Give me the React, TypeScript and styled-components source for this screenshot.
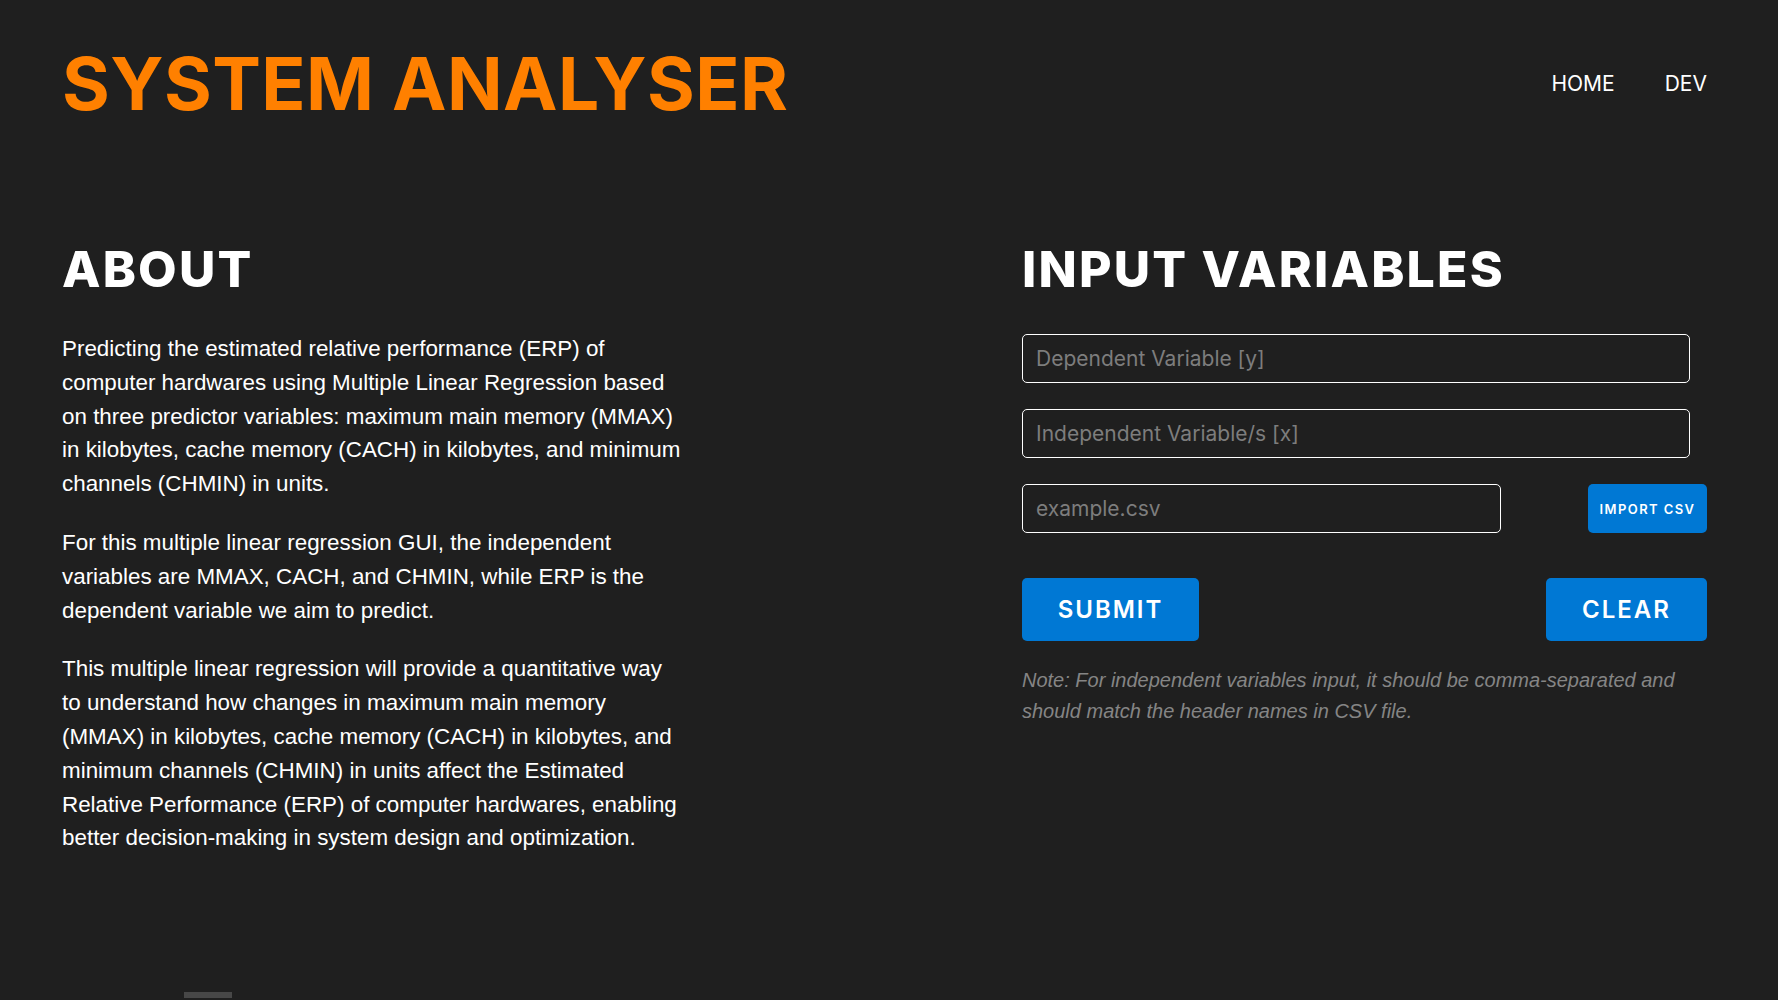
import React from "react";
import styled, { createGlobalStyle } from "styled-components";

const GlobalStyle = createGlobalStyle`
  html, body {
    margin: 0;
    padding: 0;
    background: #1f1f1f;
  }
  * { box-sizing: border-box; }
`;

const Page = styled.div`
  min-height: 100vh;
  background: #1f1f1f;
  padding: 0 71px 0 62px;
  overflow: hidden;
`;

const Header = styled.header`
  display: flex;
  justify-content: space-between;
  align-items: center;
  padding-top: 47px;
`;

const Logo = styled.h1`
  margin: 0;
  font-family: Inter, "Noto Sans", sans-serif;
  font-weight: 700;
  font-size: 73px;
  line-height: 1;
  color: #ff8000;
  letter-spacing: 0.4px;
`;

const Nav = styled.nav`
  display: flex;
  gap: 50px;
`;

const NavLink = styled.a`
  font-family: Inter, "Noto Sans", sans-serif;
  font-weight: 400;
  font-size: 21px;
  color: #ffffff;
  text-decoration: none;
`;

const Main = styled.main`
  display: grid;
  grid-template-columns: 685px 685px;
  justify-content: space-between;
  padding-top: 124px;
`;

const Column = styled.section`
  display: flex;
  flex-direction: column;
`;

const Heading = styled.h2`
  margin: 0 0 38px;
  font-family: Inter, "Noto Sans", sans-serif;
  font-weight: 800;
  font-size: 50px;
  line-height: 1;
  color: #ffffff;
  letter-spacing: 2.2px;
`;

const Paragraph = styled.p`
  margin: 0 0 25px;
  max-width: 620px;
  font-family: "Liberation Sans", Arial, sans-serif;
  font-size: 22.4px;
  line-height: 33.8px;
  color: #ffffff;
`;

const Form = styled.form`
  display: flex;
  flex-direction: column;
  gap: 26px;
  margin-top: 2px;
`;

const TextInput = styled.input<{ $width?: number }>`
  width: ${(p) => (p.$width ? `${p.$width}px` : "668px")};
  height: 49px;
  padding: 0 13px;
  border: 1px solid #ffffff;
  border-radius: 5px;
  background: transparent;
  color: #ffffff;
  font-family: Inter, "Noto Sans", sans-serif;
  font-size: 21px;
  outline: none;
  &::placeholder {
    color: #7d7d7d;
  }
`;

const Row = styled.div`
  display: flex;
  justify-content: space-between;
  align-items: center;
`;

const Button = styled.button<{ $size: "small" | "large"; $width: number }>`
  width: ${(p) => p.$width}px;
  height: ${(p) => (p.$size === "large" ? 63 : 49)}px;
  border: none;
  border-radius: 5px;
  background: #0078d4;
  color: #ffffff;
  font-family: Inter, "Noto Sans", sans-serif;
  font-weight: 600;
  font-size: ${(p) => (p.$size === "large" ? 24 : 13)}px;
  letter-spacing: ${(p) => (p.$size === "large" ? 2 : 1.4)}px;
  padding: 0;
  cursor: pointer;
`;

const ButtonRow = styled(Row)`
  margin-top: 19px;
`;

const Note = styled.p`
  margin: 24px 0 0;
  font-family: "Liberation Sans", Arial, sans-serif;
  font-style: italic;
  font-size: 20px;
  line-height: 31px;
  color: #858585;
`;

const Footer = styled.footer`
  margin-top: 112px;
  padding-left: 122px;
`;

const FooterTab = styled.div`
  width: 48px;
  height: 6px;
  background: #474747;
`;

export default function App() {
  return (
    <>
      <GlobalStyle />
      <Page>
        <Header>
          <Logo>SYSTEM ANALYSER</Logo>
          <Nav>
            <NavLink href="#">HOME</NavLink>
            <NavLink href="#">DEV</NavLink>
          </Nav>
        </Header>
        <Main>
          <Column>
            <Heading>ABOUT</Heading>
            <Paragraph>
              Predicting the estimated relative performance (ERP) of computer
              hardwares using Multiple Linear Regression based on three predictor
              variables: maximum main memory (MMAX) in kilobytes, cache memory
              (CACH) in kilobytes, and minimum channels (CHMIN) in units.
            </Paragraph>
            <Paragraph>
              For this multiple linear regression GUI, the independent variables
              are MMAX, CACH, and CHMIN, while ERP is the dependent variable we
              aim to predict.
            </Paragraph>
            <Paragraph>
              This multiple linear regression will provide a quantitative way to
              understand how changes in maximum main memory (MMAX) in kilobytes,
              cache memory (CACH) in kilobytes, and minimum channels (CHMIN) in
              units affect the Estimated Relative Performance (ERP) of computer
              hardwares, enabling better decision-making in system design and
              optimization.
            </Paragraph>
          </Column>
          <Column>
            <Heading>INPUT VARIABLES</Heading>
            <Form onSubmit={(e) => e.preventDefault()}>
              <TextInput placeholder="Dependent Variable [y]" />
              <TextInput placeholder="Independent Variable/s [x]" />
              <Row>
                <TextInput $width={479} placeholder="example.csv" />
                <Button type="button" $size="small" $width={119}>
                  IMPORT CSV
                </Button>
              </Row>
              <ButtonRow>
                <Button type="submit" $size="large" $width={177}>
                  SUBMIT
                </Button>
                <Button type="button" $size="large" $width={161}>
                  CLEAR
                </Button>
              </ButtonRow>
            </Form>
            <Note>
              Note: For independent variables input, it should be comma-separated
              and should match the header names in CSV file.
            </Note>
          </Column>
        </Main>
        <Footer>
          <FooterTab />
        </Footer>
      </Page>
    </>
  );
}
